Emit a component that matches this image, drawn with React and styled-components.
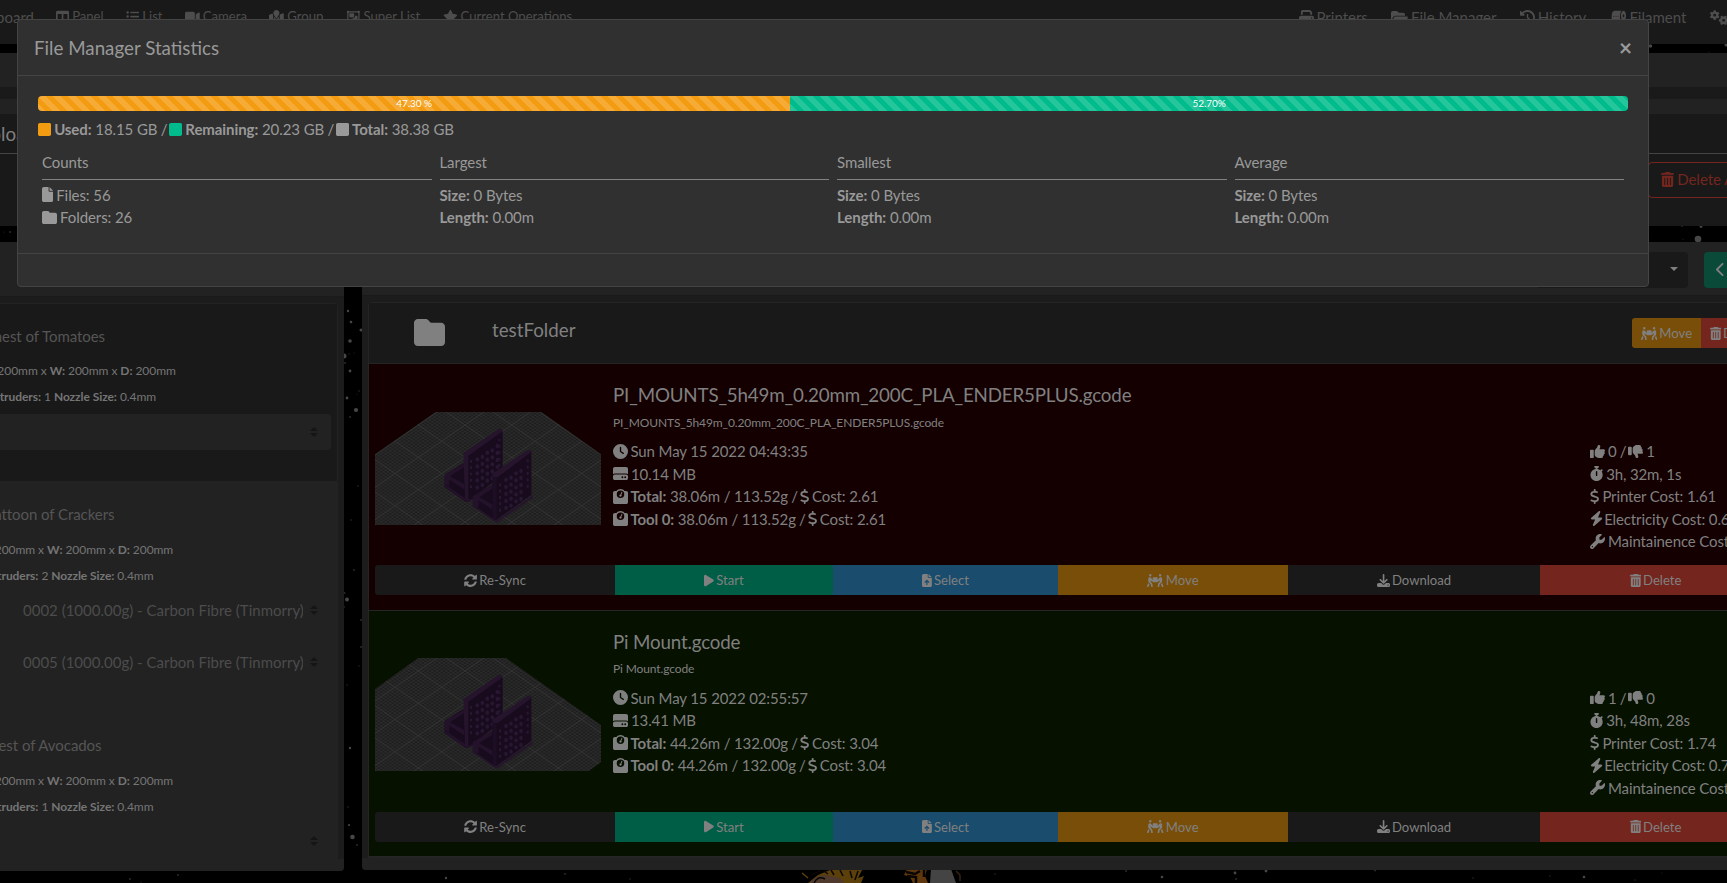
import React from "react";
import styled, { createGlobalStyle } from "styled-components";
import {
  FaTableColumns, FaListUl, FaVideo, FaMapLocation, FaRegObjectGroup, FaStar, FaPrint,
  FaFolderOpen, FaClockRotateLeft, FaGears, FaTrashCan, FaChevronLeft, FaFolder, FaFile,
  FaSquare, FaPeopleCarryBox, FaClock, FaHardDrive, FaWeightScale, FaDollarSign, FaThumbsUp,
  FaThumbsDown, FaStopwatch, FaBolt, FaWrench, FaPlay, FaFileArrowUp,
  FaDownload, FaToiletPaper,
} from "react-icons/fa6";
import { FaSyncAlt } from "react-icons/fa";

const Global = createGlobalStyle`
  * { box-sizing: border-box; }
  html, body { margin: 0; background: #000; overflow: hidden; }
  body { font-family: Lato, "Liberation Sans", sans-serif; font-size: 15px; line-height: 22.5px; color: #808080; }
  b { font-weight: 700; }
`;

const Page = styled.div`
  position: relative;
  isolation: isolate;
  width: 1727px;
  height: 883px;
  overflow: hidden;
  display: flex;
  flex-direction: column;
  white-space: nowrap;
`;
const Sky = styled.svg`
  position: absolute;
  inset: 0;
  z-index: -1;
`;
const Icon = styled.span`
  margin-right: ${(p) => p.$gap}px;
  svg {
    width: ${(p) => p.$w}em;
    height: 1em;
    vertical-align: -0.125em;
  }
`;

const Navbar = styled.nav`
  height: 44px;
  background: #191919;
  display: flex;
  align-items: flex-start;
  color: #4d4d4d;
`;
const Brand = styled.div`
  width: 34px;
  padding-top: 6px;
  display: flex;
  justify-content: flex-end;
`;
const NavGroup = styled.div`
  flex: none;
  display: flex;
  gap: ${(p) => p.$gap}px;
  width: ${(p) => p.$w}px;
  margin-left: ${(p) => p.$left}px;
  padding-top: ${(p) => p.$top}px;
  font-size: ${(p) => p.$font}px;
`;

const Uploads = styled.section`
  margin-top: 9px;
  height: 173px;
  display: flex;
  flex-direction: column;
  background: #191919;
`;
const Band = styled.div`
  height: ${(p) => p.$h}px;
  background: ${(p) => p.$bg};
`;
const UploadTitle = styled.div`
  height: 40px;
  border-bottom: 1px solid #444;
  font-size: 18.75px;
  line-height: 39px;
`;
const UploadHead = styled.div`
  width: 36px;
  display: flex;
  justify-content: flex-end;
`;
const UploadActions = styled.div`
  padding: 8px 0 0 1648px;
`;
const DeleteAll = styled.div`
  width: 110px;
  height: 36px;
  padding-left: 12px;
  border: 1px solid #74261e;
  border-radius: 4px;
  color: #74261e;
  line-height: 33px;
`;

const Columns = styled.main`
  margin-top: 16px;
  display: flex;
  align-items: flex-start;
  gap: 18px;
`;
const Panel = styled.section`
  flex: none;
  width: ${(p) => p.$w}px;
  height: ${(p) => p.$h}px;
  background: #1c1c1c;
  border-radius: 0 0 ${(p) => p.$corner};
  overflow: hidden;
  display: flex;
  flex-direction: column;
`;
const PanelHead = styled.header`
  height: ${(p) => p.$h}px;
  background: #222;
  border-bottom: 1px solid #1a1a1a;
  display: flex;
  align-items: flex-start;
  justify-content: flex-end;
  gap: 16px;
  padding-top: 10px;
`;
const PanelFoot = styled.footer`
  flex: 1;
  background: #222;
`;
const SortMenu = styled.div`
  width: 152px;
  height: 36px;
  background: #191919;
  border-radius: 4px;
  display: flex;
  align-items: center;
  justify-content: flex-end;
  padding: 0 10px 3px 0;
`;
const Caret = styled.span`
  border: 4.5px solid transparent;
  border-top-color: #808080;
  border-bottom: 0;
`;
const BackButton = styled.div`
  width: 23px;
  height: 36px;
  padding-left: 12px;
  line-height: 34px;
  background: #0a4a39;
  border-radius: 4px 0 0 4px;
`;

const Printers = styled.div`
  margin-top: 6px;
  width: 338px;
  height: 556px;
  border-top: 1px solid #222;
  border-right: 1px solid #222;
  border-radius: 0 4px 0 0;
`;
const Printer = styled.div`
  height: ${(p) => p.$h}px;
  padding-top: ${(p) => (p.$dark ? 21 : 22)}px;
  background: ${(p) => (p.$dark ? "#191919" : "#222")};
`;
const ClippedLine = styled.div`
  width: ${(p) => p.$w}px;
  height: ${(p) => p.$h}px;
  margin-top: ${(p) => p.$top ?? 0}px;
  display: flex;
  justify-content: flex-end;
  overflow: hidden;
  color: ${(p) => p.$color ?? "#757575"};
  font-size: ${(p) => p.$font}px;
  line-height: ${(p) => p.$h}px;
  letter-spacing: -0.06px;
`;
const Select = styled.div`
  width: 331px;
  height: 36px;
  margin-top: ${(p) => p.$top}px;
  background: #222;
  border-radius: 0 4px 4px 0;
  display: flex;
  align-items: center;
  justify-content: flex-end;
  padding-right: 13px;
`;
const SelectText = styled.span`
  width: 280px;
  margin-right: 7px;
  overflow: hidden;
  color: #4c4c4c;
`;
const Sorter = styled.svg`
  width: 8px;
  height: 10px;
  fill: #151515;
`;

const Files = styled.div`
  margin: 6px 0 0 6px;
  border: 1px solid #242424;
  border-right: 0;
  border-radius: 4px 0 0 0;
`;
const FolderRow = styled.div`
  height: 61px;
  background: #191919;
  border-bottom: 1px solid #242424;
  display: flex;
  align-items: flex-start;
`;
const FolderIcon = styled.div`
  flex: none;
  width: 123px;
  padding: 14px 0 0 45px;
  font-size: 31px;
  line-height: 31px;
`;
const FolderName = styled.div`
  flex: none;
  width: 1140px;
  padding-top: 16px;
  font-size: 18.75px;
`;
const Buttons = styled.div`
  flex: none;
  display: flex;
  width: ${(p) => p.$w}px;
  height: 30px;
  margin-top: ${(p) => p.$top ?? 0}px;
  border-radius: 3px 0 0 3px;
  overflow: hidden;
  font-size: 13.125px;
  line-height: 31px;
  text-align: center;
`;
const Button = styled.div`
  flex: none;
  width: ${(p) => p.$w}px;
  background: ${(p) => p.$bg};
`;

const FileRow = styled.article`
  height: 246.5px;
  padding-left: 6px;
  background: ${(p) => (p.$ok ? "#061100" : "#140001")};
  border-bottom: 1px solid #262626;
`;
const FileMain = styled.div`
  height: 201px;
  display: grid;
  grid-template-columns: 226px 965px auto;
  column-gap: 12px;
`;
const Thumb = styled.svg`
  width: 226px;
  height: 113px;
  margin-top: ${(p) => p.$top}px;
`;
const FileText = styled.div`
  padding-top: ${(p) => p.$top}px;
  letter-spacing: -0.12px;
`;
const FileTitle = styled.div`
  font-size: 18.75px;
  letter-spacing: -0.16px;
`;
const FilePath = styled.div`
  margin: 7px 0 8.5px;
  font-size: 12px;
  line-height: 18px;
`;
const Line = styled.div`
  height: 22.5px;
`;

const Modal = styled.div`
  position: absolute;
  left: 17px;
  top: 19px;
  width: 1632px;
  height: 268px;
  background: #303030;
  border: 1px solid #444;
  border-radius: 4px;
  color: #999;
`;
const ModalHead = styled.header`
  height: 56px;
  padding: 2px 16px 0 16px;
  border-bottom: 1px solid #444;
  display: flex;
  justify-content: space-between;
  align-items: center;
`;
const ModalTitle = styled.h5`
  margin: 0;
  font-size: 18.75px;
  font-weight: 400;
`;
const Close = styled.span`
  font-size: 22.5px;
  font-weight: 700;
`;
const ModalBody = styled.div`
  height: 178px;
  padding: 20px 20px 0;
  border-bottom: 1px solid #444;
  letter-spacing: -0.08px;
`;
const Progress = styled.div`
  height: 15px;
  display: flex;
  border-radius: 4px;
  overflow: hidden;
  font-size: 10px;
  line-height: 15px;
  text-align: center;
  color: #fff;
`;
const Bar = styled.div`
  width: ${(p) => p.$pct}%;
  background-color: ${(p) => p.$bg};
  background-image: linear-gradient(45deg, rgba(255,255,255,.15) 25%, transparent 25%, transparent 50%, rgba(255,255,255,.15) 50%, rgba(255,255,255,.15) 75%, transparent 75%, transparent);
  background-size: 15px 15px;
`;
const Legend = styled.div`
  margin-top: 7px;
`;
const Slash = styled.span`
  margin: 0 ${(p) => -(p.$pull ?? 2)}px 0 -0.5px;
`;
const Stats = styled.div`
  margin-top: 10px;
  display: grid;
  grid-template-columns: repeat(4, 1fr);
`;
const Stat = styled.div`
  padding: 0 4px;
`;
const StatTitle = styled.div`
  height: 29px;
  border-bottom: 1px solid #828282;
  margin-bottom: 4px;
`;
const Tint = styled.span`
  color: ${(p) => p.$c};
`;

// Glyph widths in em, for the icons that are not square.
const widths = new Map([
  [FaSquare, 0.875], [FaFile, 0.75], [FaTrashCan, 0.875], [FaDollarSign, 0.625], [FaBolt, 0.875],
  [FaPlay, 0.75], [FaFileArrowUp, 0.75], [FaStopwatch, 0.875], [FaVideo, 1.125],
  [FaMapLocation, 1.125], [FaRegObjectGroup, 1.125], [FaStar, 1.125], [FaPeopleCarryBox, 1.25],
  [FaFolderOpen, 1.125], [FaGears, 1.25], [FaChevronLeft, 0.625], [FaToiletPaper, 1.125],
]);

const leftNav = [
  [FaTableColumns, "Panel"], [FaListUl, "List"], [FaVideo, "Camera"],
  [FaMapLocation, "Group"], [FaRegObjectGroup, "Super List"], [FaStar, "Current Operations"],
];
const rightNav = [
  [FaPrint, "Printers"], [FaFolderOpen, "File Manager"], [FaClockRotateLeft, "History"],
  [FaToiletPaper, "Filament"], [FaGears, "System"],
];

const printers = [
  { name: "Chest of Tomatoes", end: 105, shift: 2.6, extruders: 1, spools: [""], h: 177, dark: true },
  { name: "Plattoon of Crackers", end: 114.5, shift: 0, extruders: 2, spools: ["0002", "0005"], h: 231 },
  { name: "Harvest of Avocados", end: 101.5, shift: 0, extruders: 1, spools: [""], h: 147 },
];

const files = [
  {
    name: "PI_MOUNTS_5h49m_0.20mm_200C_PLA_ENDER5PLUS.gcode", date: "Sun May 15 2022 04:43:35",
    size: "10.14 MB", usage: "38.06m / 113.52g", cost: "2.61", up: 0, down: 1,
    time: "3h, 32m, 1s", printer: "1.61", power: "0.64", care: "0.35", thumbTop: 48,
    bed: "15,163 197,36 514,36 693,163 693,375 15,375",
  },
  {
    name: "Pi Mount.gcode", date: "Sun May 15 2022 02:55:57",
    size: "13.41 MB", usage: "44.26m / 132.00g", cost: "3.04", up: 1, down: 0, ok: true,
    time: "3h, 48m, 28s", printer: "1.74", power: "0.70", care: "0.38", thumbTop: 47.5,
    bed: "15,129 145,36 408,36 693,237 693,348 657,375 15,375",
  },
];

const actions = [
  [FaSyncAlt, "Re-Sync", 240, "#191919"], [FaPlay, "Start", 218, "#005e46"],
  [FaFileArrowUp, "Select", 225, "#1a4c6d"], [FaPeopleCarryBox, "Move", 230, "#794e09"],
  [FaDownload, "Download", 252, "#191919"], [FaTrashCan, "Delete", 231, "#74261e"],
];

const stars = [
  [348, 311, 1.2], [351, 322, 1.3], [361, 330, 1.5], [350, 341, 1.8], [344, 356, 2.5], [349, 354, 0.7],
  [354, 353, 0.6], [345, 363, 1], [350, 371, 1.4], [359, 391, 0.8], [347, 398, 1.4], [356, 410, 2.1],
  [350, 417, 1], [357, 394, 0.5], [358, 486, 0.8], [351, 520, 0.8], [354, 570, 0.9], [347, 599.5, 2],
  [344.5, 593, 1], [344.5, 607, 0.8], [361, 620, 1], [361, 647, 1], [359, 666, 0.7], [347, 685, 0.7],
  [350, 748, 1.2], [348, 807, 0.8], [349, 825, 1.1], [352.5, 837, 2.3], [357, 845, 1], [130, 879, 1],
  [178, 875, 1], [141, 882, 0.6], [446, 878, 1.2], [565, 874, 0.9], [630, 879, 0.8], [1126, 871, 1],
  [1162, 877, 1.3], [1235, 873, 1.4], [1236, 879, 1], [1266, 871, 1.4], [1375, 870.5, 1],
  [1473, 878, 0.8], [1550, 876, 0.7], [1584, 877, 1.3], [1635, 880, 0.7], [1662, 873, 0.6],
  [995, 874, 0.8], [10, 232, 1], [4, 232, 0.6], [1682, 226, 1], [1701, 226.5, 1.4], [1698, 239, 3.3],
  [1683, 239, 0.6], [1650.5, 46, 1.7], [1709, 52, 0.6], [1726, 45, 1.5],
];

function Background() {
  return (
    <Sky width="1727" height="883">
      <rect width="1727" height="883" fill="#000" />
      {stars.map(([x, y, r], i) => <circle key={i} cx={x} cy={y} r={r} fill={r > 1 ? "#474747" : "#2a2a2a"} />)}
      <path d="M802 873l6 5" stroke="#5c410a" strokeWidth="1.5" />
      <path d="M808 883l10-8 12-5h32l-4 8 6-2-3 7z" fill="#5c400a" />
      <path d="M810 883c2-5 9-8 16-8l14 3 4 5z" fill="#4f392d" />
      <path d="M814 883q4-8 11-4M831 870l3 5M840 870l3 6M824 871l4 3M850 871l2 7M820 871l-8 4M858 871l-3 9" stroke="#0a0704" strokeWidth="1.5" fill="none" />
      <path d="M907 869h20l-2 7 3 7h-15l-3-6-6-2z" fill="#5f370c" />
      <path d="M907 876l9 1v6M906 872l9 2 5-3M924 869v8" stroke="#080502" strokeWidth="2.5" fill="none" />
      <path d="M931 869h20l5 14h-26z" fill="#444" />
      <path d="M956 871l4 4v6" stroke="#352313" strokeWidth="1.5" fill="none" />
    </Sky>
  );
}

function Preview({ id, bed, top }) {
  const holes = (x0, y0, cols, rows) => {
    const out = [];
    for (let c = 0; c < cols; c++)
      for (let r = 0; r < rows; r++)
        out.push(<ellipse key={`${c}-${r}`} cx={x0 + c * 15} cy={y0 + r * 21 - c * 10 + (c % 2) * 3} rx="5.5" ry="6.5" />);
    return out;
  };
  return (
    <Thumb viewBox="15 36 678 339" $top={top}>
      <defs>
        <pattern id={`${id}s`} width="14" height="9.7" patternUnits="userSpaceOnUse" x="285" y="75">
          <path d="M-2 -1.4L16 11.1M16 -1.4L-2 11.1" stroke="#303030" strokeWidth="2" />
        </pattern>
        <pattern id={`${id}l`} width="140" height="97" patternUnits="userSpaceOnUse" x="285" y="75">
          <path d="M-5 -3.5L145 100.5M145 -3.5L-5 100.5" stroke="#363636" strokeWidth="2.6" />
        </pattern>
      </defs>
      <polygon points={bed} fill="#1d1d1d" />
      <polygon points={bed} fill={`url(#${id}s)`} />
      <polygon points={bed} fill={`url(#${id}l)`} />
      <path d="M224 224l46-28 14-6v112l14 3-12 0-62-43z" fill="#180b1e" />
      <path d="M224 224l58-33v10l-42 28 44 24v16l-46-30v20l-14-6z" fill="#231229" />
      <path d="M224 252l64 44 22-8v10l-14 8-12-2-60-42z" fill="#231229" />
      <path d="M282 162l108-74 8 6v132l-96 72-20-4z" fill="#180b1e" />
      <path d="M280 160l106-73q8-1 12 7l-103 73v130h-10z" fill="#26142d" />
      <g fill="#281730">{holes(322, 178, 5, 5)}</g>
      <path d="M303 180v90M388 116v92" stroke="#281730" strokeWidth="6" strokeDasharray="8 11" />
      <path d="M308 290l62-36 4 106-64-44z" fill="#180b1e" />
      <path d="M308 288l62-36v12l-42 28 44 24v16l-46-30v22l-18-8z" fill="#231229" />
      <path d="M306 314l72 48 110-76v8l-108 74-72-48z" fill="#26142d" />
      <path d="M368 224l107-75 9 6v130l-106 76-10-6z" fill="#180b1e" />
      <path d="M366 222l108-73q8-1 10 7l-102 76-14-2z" fill="#26142d" />
      <path d="M374 232v125" stroke="#1e0e25" strokeWidth="12" />
      <g fill="#281730">{holes(408, 240, 4, 5)}</g>
      <path d="M390 250v90M473 178v90" stroke="#281730" strokeWidth="6" strokeDasharray="9 10" />
    </Thumb>
  );
}

const I = ({ as: C, gap = 3 }) => <Icon $gap={gap} $w={widths.get(C) ?? 1}><C /></Icon>;

function NavList({ items, ...rest }) {
  return (
    <NavGroup {...rest}>
      {items.map(([C, label]) => <span key={label}><I as={C} />{label}</span>)}
    </NavGroup>
  );
}

function PrinterCard({ p }) {
  return (
    <Printer $h={p.h} $dark={p.dark}>
      <ClippedLine $w={p.end} $h={22} $font={15} $color="#555">{p.name}</ClippedLine>
      <ClippedLine $w={173.2 + p.shift} $h={18} $top={p.dark ? 15 : 16} $font={12}>
        <span><b>H:</b> 200mm x <b>W:</b> 200mm x <b>D:</b> 200mm</span>
      </ClippedLine>
      <ClippedLine $w={153.5 + p.shift} $h={18} $top={8} $font={12}>
        <span><b>Extruders:</b> {p.extruders} <b>Nozzle Size:</b> 0.4mm</span>
      </ClippedLine>
      {p.spools.map((s, i) => (
        <Select key={i} $top={i ? 16 : p.dark ? 8 : 7}>
          {s && <SelectText>{s} (1000.00g) - Carbon Fibre (Tinmorry)</SelectText>}
          <Sorter viewBox="0 0 8 10"><path d="M4 0l4 4H0zM4 10L0 6h8z" /></Sorter>
        </Select>
      ))}
    </Printer>
  );
}

function Usage({ label, usage, cost }) {
  return (
    <Line>
      <I as={FaWeightScale} gap={2.5} /><b>{label}:</b> {usage} <Slash $pull={1.5}>/</Slash> <I as={FaDollarSign} gap={2.5} />Cost: {cost}
    </Line>
  );
}

function FileCard({ f, id }) {
  return (
    <FileRow $ok={f.ok}>
      <FileMain>
        <Preview id={id} bed={f.bed} top={f.thumbTop} />
        <FileText $top={20}>
          <FileTitle>{f.name}</FileTitle>
          <FilePath>{f.name}</FilePath>
          <Line><I as={FaClock} gap={2.5} />{f.date}</Line>
          <Line><I as={FaHardDrive} />{f.size}</Line>
          <Usage label="Total" usage={f.usage} cost={f.cost} />
          <Usage label="Tool 0" usage={f.usage} cost={f.cost} />
        </FileText>
        <FileText $top={76}>
          <Line><I as={FaThumbsUp} />{f.up} <Slash>/</Slash> <I as={FaThumbsDown} />{f.down}</Line>
          <Line><I as={FaStopwatch} />{f.time}</Line>
          <Line><I as={FaDollarSign} />Printer Cost: {f.printer}</Line>
          <Line><I as={FaBolt} gap={1} />Electricity Cost: {f.power}</Line>
          <Line><I as={FaWrench} />Maintainence Cost: {f.care}</Line>
        </FileText>
      </FileMain>
      <Buttons $w={1396}>
        {actions.map(([C, label, w, bg]) => <Button key={label} $w={w} $bg={bg}><I as={C} gap={2} />{label}</Button>)}
      </Buttons>
    </FileRow>
  );
}

function StatisticsModal() {
  return (
    <Modal>
      <ModalHead>
        <ModalTitle>File Manager Statistics</ModalTitle>
        <Close>×</Close>
      </ModalHead>
      <ModalBody>
        <Progress>
          <Bar $pct={47.3} $bg="#f39c12">47.30 %</Bar>
          <Bar $pct={52.7} $bg="#00bc8c">52.70%</Bar>
        </Progress>
        <Legend>
          <Tint $c="#f39c12"><I as={FaSquare} /></Tint><b>Used:</b> 18.15 GB <Slash>/</Slash> <Tint $c="#00bc8c"><I as={FaSquare} /></Tint>
          <b>Remaining:</b> 20.23 GB <Slash>/</Slash> <I as={FaSquare} /><b>Total:</b> 38.38 GB
        </Legend>
        <Stats>
          <Stat>
            <StatTitle>Counts</StatTitle>
            <Line><I as={FaFile} />Files: 56</Line>
            <Line><I as={FaFolder} />Folders: 26</Line>
          </Stat>
          {["Largest", "Smallest", "Average"].map((t) => (
            <Stat key={t}>
              <StatTitle>{t}</StatTitle>
              <Line><b>Size:</b> 0 Bytes</Line>
              <Line><b>Length:</b> 0.00m</Line>
            </Stat>
          ))}
        </Stats>
      </ModalBody>
    </Modal>
  );
}

export default function App() {
  return (
    <>
      <Global />
      <Page>
        <Background />
        <Navbar>
          <Brand>Dashboard</Brand>
          <NavList items={leftNav} $left={22} $w={1242.5} $gap={22.5} $top={5} $font={13.125} />
          <NavList items={rightNav} $left={0} $w={500} $gap={23.3} $top={6} $font={15} />
        </Navbar>
        <Uploads>
          <Band $h={34} $bg="#222" />
          <Band $h={12} $bg="#1a1a1a" />
          <Band $h={15} $bg="#222" />
          <UploadTitle><UploadHead>Upload</UploadHead></UploadTitle>
          <UploadActions>
            <DeleteAll><I as={FaTrashCan} />Delete All</DeleteAll>
          </UploadActions>
        </Uploads>
        <Columns>
          <Panel $w={344} $h={629} $corner="4px 0">
            <PanelHead $h={55} />
            <Printers>{printers.map((p) => <PrinterCard key={p.name} p={p} />)}</Printers>
            <PanelFoot />
          </Panel>
          <Panel $w={1365} $h={628} $corner="0 4px">
            <PanelHead $h={54}>
              <SortMenu><Caret /></SortMenu>
              <BackButton><I as={FaChevronLeft} /></BackButton>
            </PanelHead>
            <Files>
              <FolderRow>
                <FolderIcon><I as={FaFolder} /></FolderIcon>
                <FolderName>testFolder</FolderName>
                <Buttons $w={160} $top={15}>
                  <Button $w={69} $bg="#794e09"><I as={FaPeopleCarryBox} gap={2} />Move</Button>
                  <Button $w={69} $bg="#74261e"><I as={FaTrashCan} gap={2} />Delete</Button>
                </Buttons>
              </FolderRow>
              {files.map((f, i) => <FileCard key={f.name} f={f} id={`bed${i}`} />)}
            </Files>
            <PanelFoot />
          </Panel>
        </Columns>
        <StatisticsModal />
      </Page>
    </>
  );
}
